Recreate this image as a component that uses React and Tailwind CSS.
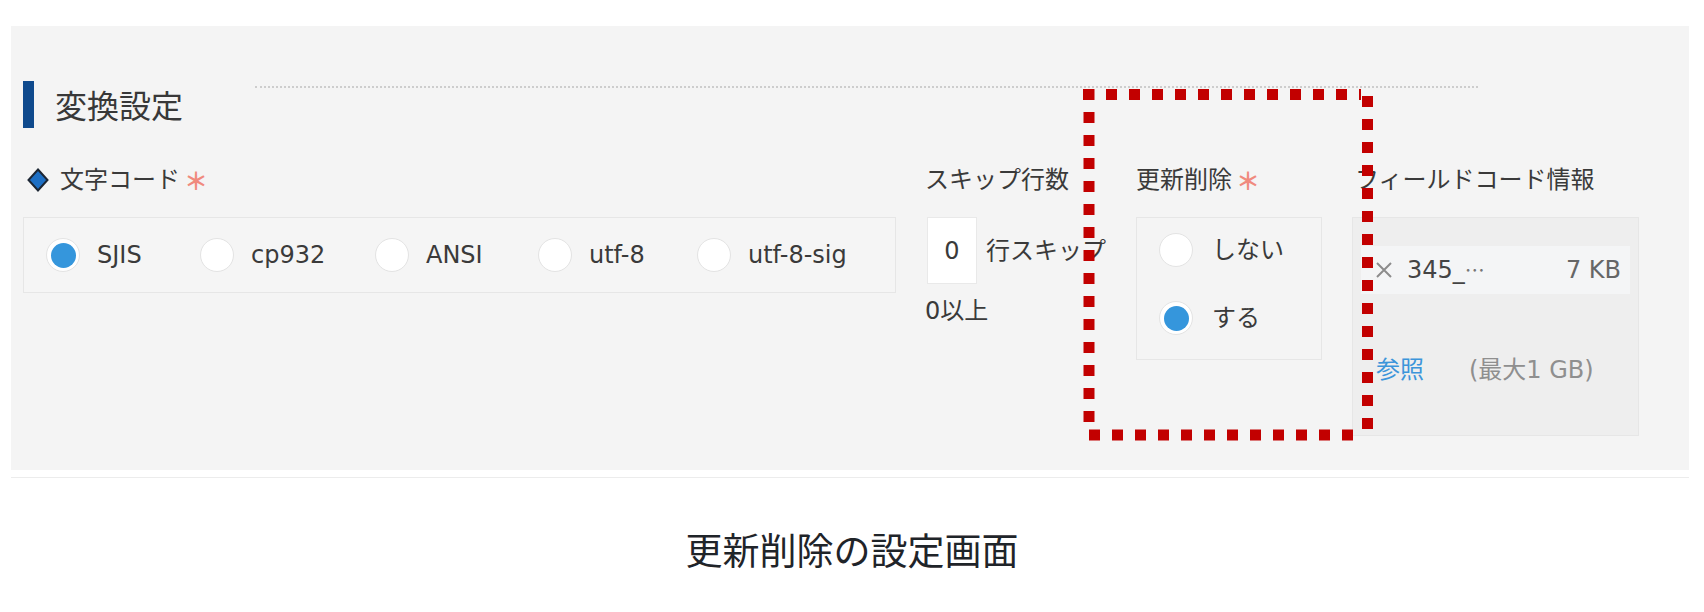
import React from 'react';

const ENCODINGS = [
  { label: 'SJIS', checked: true, width: 'w-[154px]' },
  { label: 'cp932', width: 'w-[175px]' },
  { label: 'ANSI', width: 'w-[163px]' },
  { label: 'utf-8', width: 'w-[159px]' },
  { label: 'utf-8-sig', width: '' },
];

const Radio = ({ checked }) => (
  <span className="flex h-[34px] w-[34px] shrink-0 items-center justify-center rounded-full border border-[#e3e3e3] bg-white">
    {checked && <span className="h-[25px] w-[25px] rounded-full bg-[#3596dc]" />}
  </span>
);

const Required = () => (
  <span className="ml-[4px] font-['Noto_Sans_CJK_JP'] text-[24px] font-bold text-[#f08a7e]">＊</span>
);

const Diamond = () => (
  <svg width="22" height="24" viewBox="0 0 22 24" className="shrink-0">
    <path d="M11 1.5 L20.5 12 L11 22.5 L1.5 12 Z" fill="#1d6fc4" stroke="#1c2633" strokeWidth="2" />
  </svg>
);

// 赤い点線の注釈枠
const Annotation = () => (
  <svg width="1704" height="612" className="pointer-events-none absolute left-0 top-0">
    <g stroke="#c20000" strokeWidth="11" strokeDasharray="11 12" fill="none">
      <line x1="1083" y1="94.5" x2="1361" y2="94.5" />
      <line x1="1089" y1="89" x2="1089" y2="431" />
      <line x1="1367.5" y1="96" x2="1367.5" y2="434" />
      <line x1="1089" y1="435" x2="1358" y2="435" />
    </g>
  </svg>
);

export default function App() {
  return (
    <div className="relative h-[612px] w-[1704px] bg-white pt-[26px] font-['DejaVu_Sans','Noto_Sans_CJK_JP',sans-serif] text-[24px] text-[#3a3a3a]">
      <div className="ml-[11px] w-[1678px] border-b border-[#ececec] pb-[7px]">
        <div className="h-[444px] bg-[#f4f4f4] pl-[12px] pt-[55px]">
          {/* 見出し */}
          <div className="flex h-[47px]">
            <div className="w-[11px] bg-[#0f4a8d]" />
            <div className="ml-[21px] font-['Noto_Sans_CJK_JP'] text-[32px] leading-[47px] text-[#383838]">変換設定</div>
            <div className="ml-[72px] mt-[5px] h-0 w-[1223px] border-t-2 border-dotted border-[#cdcdcd]" />
          </div>

          <div className="mt-[40px] flex items-start">
            {/* 文字コード */}
            <div className="w-[873px]">
              <div className="flex h-[24px] items-center leading-[24px]">
                <span className="ml-[4px] flex"><Diamond /></span>
                <span className="ml-[11px]">文字コード</span>
                <Required />
              </div>
              <div className="mt-[25px] flex h-[76px] items-center border border-[#e6e6e6] bg-[#f5f5f5] pl-[22px]">
                {ENCODINGS.map((enc) => (
                  <div key={enc.label} className={`flex items-center ${enc.width}`}>
                    <Radio checked={enc.checked} />
                    <span className="ml-[17px] leading-[24px]">{enc.label}</span>
                  </div>
                ))}
              </div>
            </div>

            {/* スキップ行数 */}
            <div className="ml-[29px] w-[211px]">
              <div className="h-[24px] leading-[24px]">スキップ行数</div>
              <div className="mt-[25px] flex items-center">
                <div className="ml-[2px] flex h-[67px] w-[50px] items-center justify-center border border-[#e9e9e9] bg-white">0</div>
                <span className="ml-[9px] whitespace-nowrap leading-[24px]">行スキップ</span>
              </div>
              <div className="mt-[15px] leading-[24px]">0以上</div>
            </div>

            {/* 更新削除 */}
            <div className="w-[186px]">
              <div className="flex h-[24px] items-center leading-[24px]">
                <span>更新削除</span>
                <Required />
              </div>
              <div className="mt-[25px] flex h-[143px] flex-col gap-[34px] border border-[#e6e6e6] bg-[#f4f4f4] pl-[22px] pt-[15px]">
                <div className="flex items-center">
                  <Radio />
                  <span className="ml-[19px] leading-[24px]">しない</span>
                </div>
                <div className="flex items-center">
                  <Radio checked />
                  <span className="ml-[19px] leading-[24px]">する</span>
                </div>
              </div>
            </div>

            {/* フィールドコード情報 */}
            <div className="ml-[30px] w-[287px]">
              <div className="ml-[3px] h-[24px] whitespace-nowrap leading-[24px]">フィールドコード情報</div>
              <div className="mt-[25px] h-[219px] border border-[#e6e6e6] bg-[#eeeeee] px-[8px] pt-[28px]">
                <div className="flex h-[48px] items-center bg-[#f4f5f6] pl-[14px] pr-[9px]">
                  <svg width="18" height="18" viewBox="0 0 18 18" className="shrink-0">
                    <path d="M2 2 L16 16 M16 2 L2 16" stroke="#8c8c8c" strokeWidth="2" />
                  </svg>
                  <span className="ml-[14px] leading-[24px] text-[#444]">345_</span>
                  <span className="font-['Noto_Sans_CJK_JP'] text-[20px] leading-[24px] text-[#777]">…</span>
                  <span className="ml-auto leading-[24px] text-[#666]">7 KB</span>
                </div>
                <div className="mt-[64px] flex pl-[15px] leading-[24px]">
                  <span className="text-[#3c95da]">参照</span>
                  <span className="ml-[45px] text-[#8f8f8f]">(最大1 GB)</span>
                </div>
              </div>
            </div>
          </div>
        </div>
      </div>

      <div className="mt-[53px] text-center font-['Noto_Sans_CJK_JP'] text-[37px] leading-[37px] text-[#1f2429]">
        更新削除の設定画面
      </div>

      <Annotation />
    </div>
  );
}
